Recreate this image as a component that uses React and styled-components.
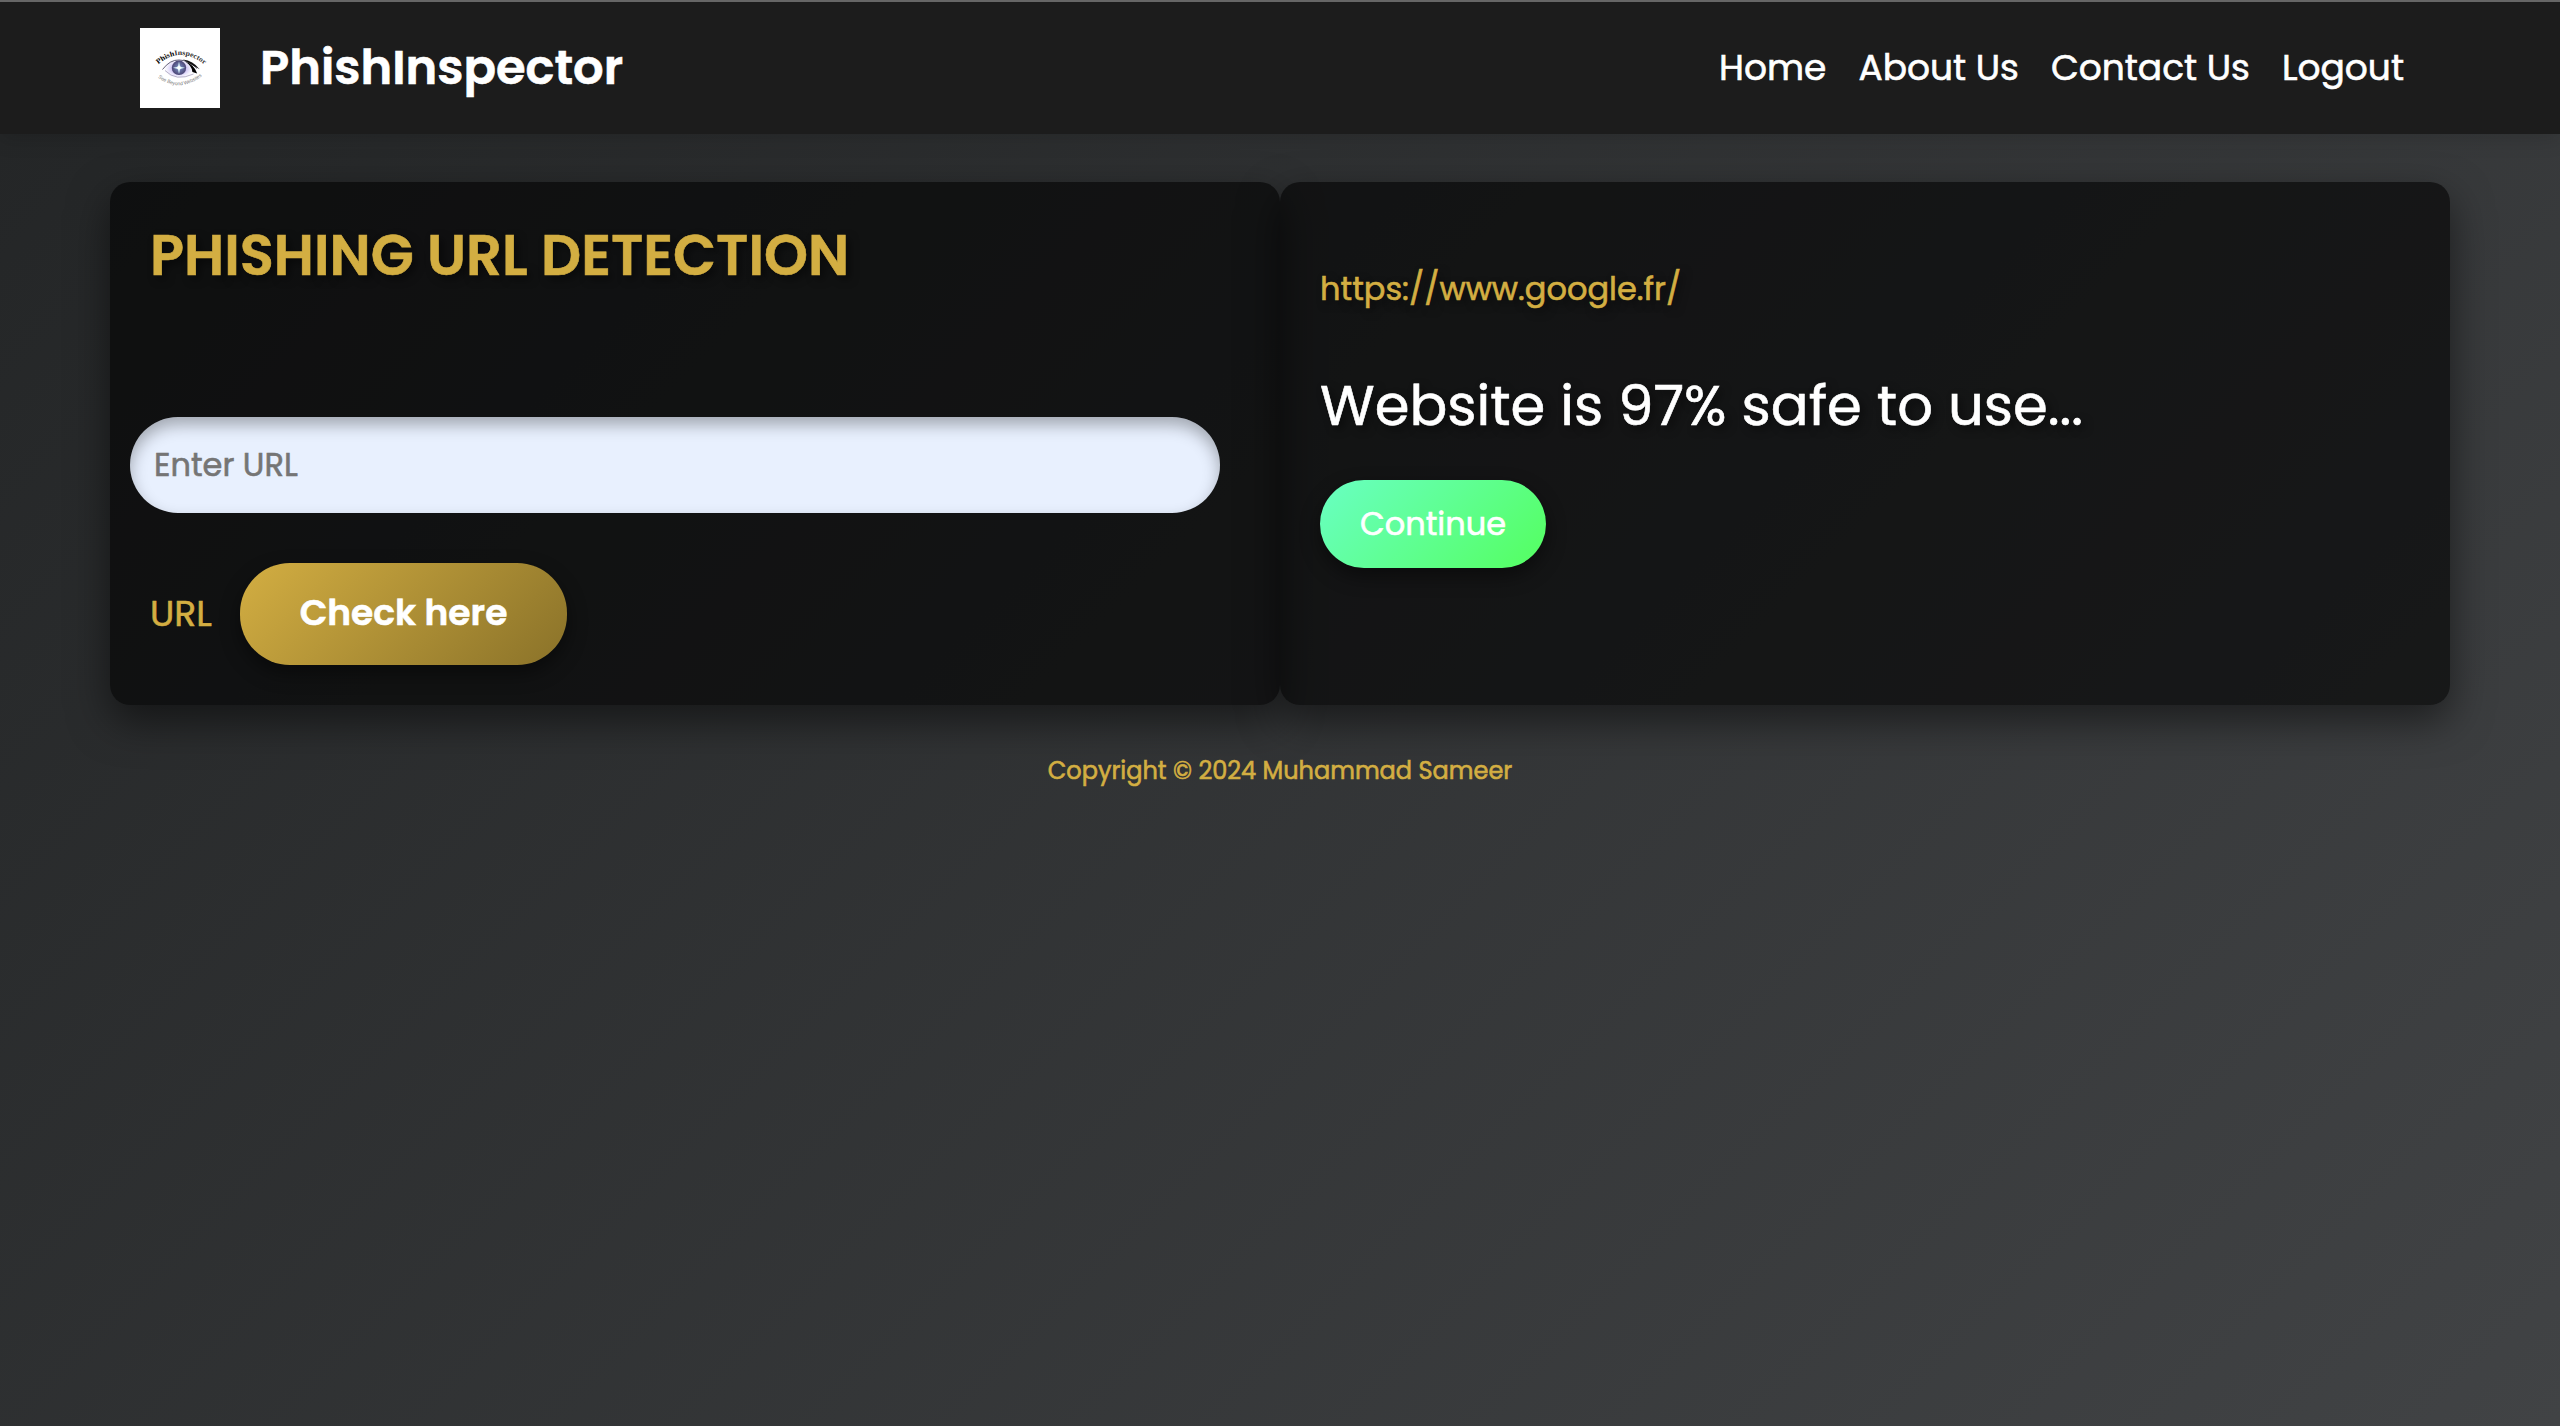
import React from 'react';
import styled, { createGlobalStyle } from 'styled-components';

const gold = '#d3ae42';

const GlobalStyle = createGlobalStyle`
  * { box-sizing: border-box; }
  body {
    margin: 0;
    font-family: Poppins, Inter, sans-serif;
    color: #fff;
    -webkit-text-stroke: 0.6px currentColor;
  }
`;

const Page = styled.div`
  min-height: 100vh;
  display: flex;
  flex-direction: column;
  background: linear-gradient(135deg, #232526, #414345);
`;

const Header = styled.header`
  height: 134px;
  padding: 0 140px;
  display: flex;
  align-items: center;
  justify-content: space-between;
  background: #1c1c1c;
  border-top: 2px solid #666;
  box-shadow: 0 4px 20px rgba(0, 0, 0, 0.15);
`;

const Brand = styled.div`
  display: flex;
  align-items: center;
  gap: 40px;
`;

const BrandName = styled.div`
  font-size: 48px;
  font-weight: 600;
  line-height: 72px;
`;

const Nav = styled.nav`
  display: flex;
`;

const NavLink = styled.a`
  padding: 0 16px;
  font-size: 36px;
  line-height: 54px;
  color: #fff;
  margin-top: -1px;
`;

const Main = styled.main`
  display: grid;
  grid-template-columns: 1fr 1fr;
  padding: 48px 110px 0;
`;

const Card = styled.section`
  height: 523px;
  padding: ${(p) => p.$top}px 40px 40px;
  display: flex;
  flex-direction: column;
  align-items: flex-start;
  border-radius: 20px;
  background: rgba(0, 0, 0, 0.6);
  box-shadow: 0 16px 40px rgba(0, 0, 0, 0.5);
`;

const Heading = styled.h1`
  margin: 0;
  font-size: 56px;
  line-height: 67px;
  font-weight: ${(p) => p.$weight};
  color: ${(p) => p.$color};
  text-shadow: 4px 4px 8px rgba(0, 0, 0, 0.5);
`;

const UrlInput = styled.input`
  width: 1090px;
  height: 96px;
  margin: 128px 0 50px -20px;
  padding: 0 24px;
  border: 0;
  border-radius: 50px;
  background: #e8f0fe;
  box-shadow: inset 0 8px 16px rgba(0, 0, 0, 0.3);
  font: 400 32px Poppins, Inter, sans-serif;
  &::placeholder { color: #757575; opacity: 1; }
`;

const Row = styled.div`
  display: flex;
  align-items: center;
`;

const Label = styled.label`
  width: 90px;
  font-size: 36px;
  line-height: 54px;
  padding-bottom: 1px;
  color: ${gold};
`;

const Button = styled.button`
  width: ${(p) => p.$width}px;
  height: ${(p) => p.$height}px;
  padding: 0 0 ${(p) => p.$lift || 0}px;
  border: 0;
  border-radius: 50px;
  color: #fff;
  white-space: nowrap;
  font: ${(p) => p.$font} Poppins, Inter, sans-serif;
  background: linear-gradient(135deg, ${(p) => p.$from}, ${(p) => p.$to});
  box-shadow: 0 8px 20px rgba(0, 0, 0, 0.45);
`;

const CheckedUrl = styled.p`
  margin: 0 0 59px;
  font-size: 32px;
  line-height: 48px;
  color: ${gold};
  text-shadow: 4px 4px 8px rgba(0, 0, 0, 0.5);
`;

const Result = styled(Heading)`
  margin-bottom: 41px;
`;

const Footer = styled.footer`
  margin-top: 48px;
  text-align: center;
  font-size: 24px;
  line-height: 36px;
  color: ${gold};
`;

const LogoText = styled.text`
  -webkit-text-stroke: 0;
`;

const Logo = () => (
  <svg width="80" height="80" viewBox="0 0 80 80">
    <defs>
      <radialGradient id="glow">
        <stop offset="0.45" stopColor="#b9a8ee" stopOpacity="0.75" />
        <stop offset="1" stopColor="#d9d4fb" stopOpacity="0" />
      </radialGradient>
      <radialGradient id="iris">
        <stop offset="0" stopColor="#b9dcf0" />
        <stop offset="0.4" stopColor="#6a74a8" />
        <stop offset="1" stopColor="#4b4674" />
      </radialGradient>
      <path id="arcTop" d="M18.2 36.4 Q39.5 17.4 64 36.4" />
      <path id="arcBottom" d="M18 49.5 Q39.5 65.5 62 48" />
    </defs>
    <rect width="80" height="80" fill="#fff" />
    <LogoText fontFamily="Liberation Serif, serif" fontSize="7.2" fontWeight="700" fill="#333">
      <textPath href="#arcTop" textLength="51" lengthAdjust="spacingAndGlyphs">
        <tspan fill="#000">Phish</tspan>
        <tspan>Inspector</tspan>
      </textPath>
    </LogoText>
    <ellipse cx="39" cy="40.5" rx="15" ry="10" fill="url(#glow)" />
    <path d="M22.5 41.5 Q30 31.6 39 32 Q49 32.2 57 40.5" fill="none" stroke="#403c58" strokeWidth="0.8" />
    <path d="M25 42.5 Q36 54 53.5 46" fill="none" stroke="#8a80a4" strokeWidth="0.6" />
    <path d="M43 31.4 Q53 32.4 59.6 41.2 Q52 37 43 31.4Z" fill="#111" />
    <path d="M45 33.6 Q54 36.6 57.2 45.4 L52.4 44 Q52 38 45 33.6Z" fill="#000" />
    <circle cx="39" cy="39.8" r="7.2" fill="url(#iris)" />
    <path d="M39 33.6 L40.1 38.7 L45 39.8 L40.1 40.9 L39 46 L37.9 40.9 L33 39.8 L37.9 38.7Z" fill="#d8f3fa" />
    <circle cx="39" cy="39.8" r="1.8" fill="#fff" />
    <LogoText fontFamily="Liberation Sans, sans-serif" fontSize="5" fill="#777">
      <textPath href="#arcBottom" textLength="48" lengthAdjust="spacingAndGlyphs">See Beyond Websites</textPath>
    </LogoText>
  </svg>
);

const links = ['Home', 'About Us', 'Contact Us', 'Logout'];

export default function App() {
  return (
    <Page>
      <GlobalStyle />
      <Header>
        <Brand>
          <Logo />
          <BrandName>PhishInspector</BrandName>
        </Brand>
        <Nav>
          {links.map((name) => (
            <NavLink key={name}>{name}</NavLink>
          ))}
        </Nav>
      </Header>
      <Main>
        <Card $top={40}>
          <Heading $weight={600} $color={gold}>PHISHING URL DETECTION</Heading>
          <UrlInput placeholder="Enter URL" />
          <Row>
            <Label>URL</Label>
            <Button $width={327} $height={102} $lift={3} $font="600 36px" $from={gold} $to="#8a7229">Check here</Button>
          </Row>
        </Card>
        <Card $top={83}>
          <CheckedUrl>https://www.google.fr/</CheckedUrl>
          <Result as="h2" $weight={400} $color="#fff">Website is 97% safe to use...</Result>
          <Button $width={226} $height={88} $font="400 32px" $from="#69ffc3" $to="#54ff5f">Continue</Button>
        </Card>
      </Main>
      <Footer>Copyright © 2024 Muhammad Sameer</Footer>
    </Page>
  );
}
